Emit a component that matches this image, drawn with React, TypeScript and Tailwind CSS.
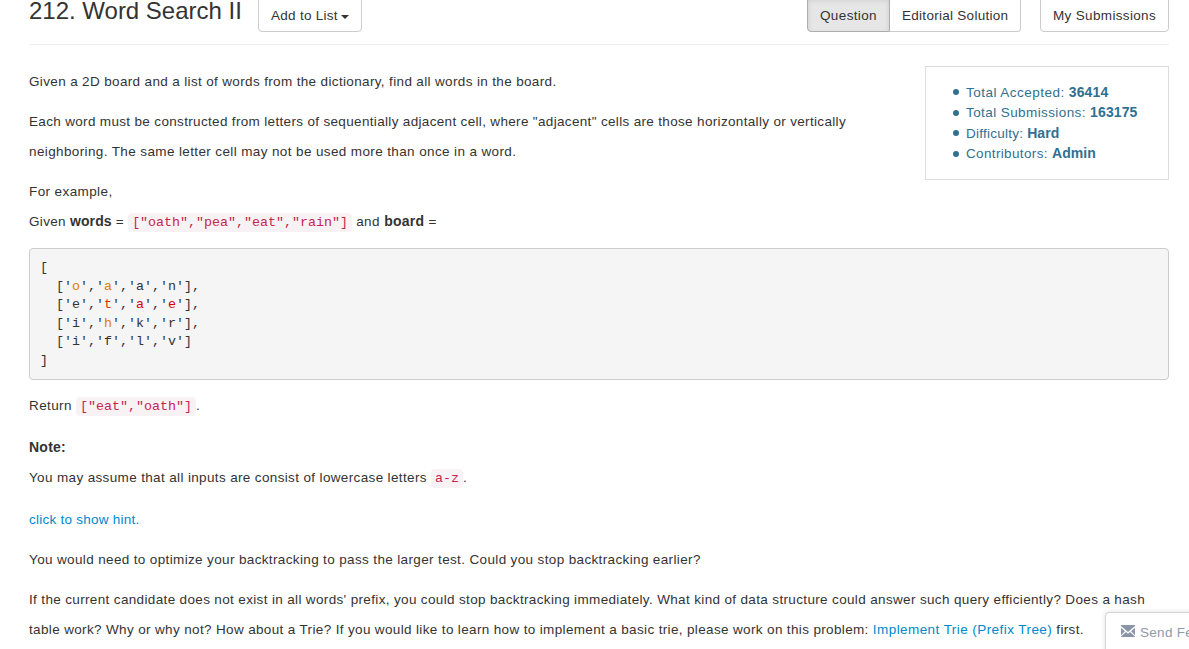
import type { ReactNode } from "react";

function Line({ children, className = "pt-px" }: { children: ReactNode; className?: string }) {
  return <span className={`block h-[30px] whitespace-pre ${className}`}>{children}</span>;
}

function Code({ children }: { children: ReactNode }) {
  return (
    <code className="rounded bg-[#f9f2f4] px-1 py-0.5 font-['Liberation_Mono',monospace] text-[13.33px] tracking-normal text-[#c7254e]">
      {children}
    </code>
  );
}

function Stat({ label, value, className = "" }: { label: string; value: string; className?: string }) {
  return (
    <li className="flex items-center whitespace-pre">
      <span className="mr-[7px] size-[6px] rounded-full bg-[#31708f]" />
      <span className={`pt-px ${className}`}>
        {label}: <b className="text-[14px] leading-none tracking-[0.1px]">{value}</b>
      </span>
    </li>
  );
}

const O = ({ children }: { children: ReactNode }) => <span className="text-[#e07c00]">{children}</span>;
const R = ({ children }: { children: ReactNode }) => <span className="text-[#d90000]">{children}</span>;

export default function App() {
  return (
    <div className="relative h-[649px] w-[1189px] overflow-hidden bg-white pr-5 pl-[29px] font-['Liberation_Sans',Arial,sans-serif] text-[13.5px] leading-[30px] text-[#333]">
      <header className="flex h-[45px] items-start border-b border-[#eee] leading-[32px]">
        <h3 className="w-[229px] whitespace-pre text-[24px] leading-[22px] tracking-[-0.01px]">212. Word Search II</h3>
        <button className="-mt-1 flex h-9 w-[104px] items-center rounded border border-[#ccc] pt-1 pl-3 tracking-[0.28px] whitespace-pre">
          Add to List
          <span className="mt-0.5 ml-[3px] border-x-4 border-t-4 border-x-transparent border-t-[#333]" />
        </button>
        <div className="-mt-1 ml-auto flex">
          <button className="flex h-9 w-[83px] items-center rounded-l border border-[#adadad] bg-[#e6e6e6] pt-1 pl-3 tracking-[0.37px] shadow-[inset_0_3px_5px_rgba(0,0,0,0.125)]">
            Question
          </button>
          <button className="flex h-9 w-[131px] items-center rounded-r border border-l-0 border-[#ccc] pt-1 pl-3 tracking-[0.28px] whitespace-pre">
            Editorial Solution
          </button>
        </div>
        <button className="-mt-1 ml-[19px] flex h-9 w-[129px] items-center rounded border border-[#ccc] pt-1 pl-3 tracking-[0.34px] whitespace-pre">
          My Submissions
        </button>
      </header>

      <main className="pt-[21px]">
        <div className="flex h-[170px] justify-between">
          <div>
            <p className="mb-[10px]">
              <Line className="pt-px tracking-[0.352px]">Given a 2D board and a list of words from the dictionary, find all words in the board.</Line>
            </p>
            <p className="mb-[10px]">
              <Line className="pt-px tracking-[0.333px]">Each word must be constructed from letters of sequentially adjacent cell, where "adjacent" cells are those horizontally or vertically</Line>
              <Line className="pt-px tracking-[0.378px]">neighboring. The same letter cell may not be used more than once in a word.</Line>
            </p>
            <p>
              <Line className="pt-px tracking-[0.4px]">For example,</Line>
              <Line className="tracking-[0.32px]">
                Given <b className="text-[14px] tracking-[0.12px]">words</b> = <Code>["oath","pea","eat","rain"]</Code> <span className="tracking-[0.45px]">and <b className="text-[14px] tracking-[0.25px]">board</b> =</span>
              </Line>
            </p>
          </div>
          <ul className="grid h-[114px] w-[244px] auto-rows-[20.57px] items-center border border-[#ddd] pt-[15px] pl-[27px] leading-5 text-[#31708f]">
            <Stat label="Total Accepted" value="36414" className="tracking-[0.47px]" />
            <Stat label="Total Submissions" value="163175" className="tracking-[0.41px]" />
            <Stat label="Difficulty" value="Hard" className="tracking-[0.24px]" />
            <Stat label="Contributors" value="Admin" className="tracking-[0.35px]" />
          </ul>
        </div>

        <pre className="mt-3 mb-[11px] h-[132px] rounded border border-[#ccc] bg-[#f5f5f5] pt-[10px] pl-[10px] font-['Liberation_Mono',monospace] text-[13.33px] leading-[18.57px]">
          <div>[</div>
          <div>{"  ['"}<O>o</O>{"','"}<O>a</O>{"','a','n'],"}</div>
          <div>{"  ['e','"}<span className="text-[#dc3000]">t</span>{"','"}<R>a</R>{"','"}<R>e</R>{"'],"}</div>
          <div>{"  ['i','"}<O>h</O>{"','k','r'],"}</div>
          <div>{"  ['i','f','l','v']"}</div>
          <div>]</div>
        </pre>

        <p>
          <Line className="tracking-[0.4px]">Return <Code>["eat","oath"]</Code>.</Line>
        </p>
        <p className="mt-[11px]">
          <Line className="tracking-[0.25px]"><b className="text-[14px]">Note:</b></Line>
          <Line className="pt-px tracking-[0.356px]">You may assume that all inputs are consist of lowercase letters <Code>a-z</Code>.</Line>
        </p>
        <p className="mt-3 text-[#0088cc]">
          <Line className="pt-px tracking-[0.25px]">click to show hint.</Line>
        </p>
        <p className="mt-[10px]">
          <Line className="pt-px tracking-[0.36px]">You would need to optimize your backtracking to pass the larger test. Could you stop backtracking earlier?</Line>
        </p>
        <p className="mt-[10px]">
          <Line className="pt-px tracking-[0.35px]">If the current candidate does not exist in all words' prefix, you could stop backtracking immediately. What kind of data structure could answer such query efficiently? Does a hash</Line>
          <Line className="pt-px tracking-[0.353px]">
            table work? Why or why not? How about a Trie? If you would like to learn how to implement a basic trie, please work on this problem: <a className="tracking-[0.43px] text-[#0088cc]">Implement Trie (Prefix Tree)</a> first.
          </Line>
        </p>
      </main>

      <div className="absolute top-[612px] left-[1105px] flex h-12 w-[120px] rounded-tl border border-[#d5d5d5] bg-white pt-[5px] pl-[15px] tracking-[0.3px] whitespace-pre text-[#9199a9] shadow-[0_0_5px_#ddd]">
        <svg viewBox="0 0 14 12" className="mt-[7px] mr-[5px] h-3 w-[14px] shrink-0" fill="#8c94a8">
          <path d="M0 0h14v1L7 7 0 1zM0 2.8l4 3.4-4 4zM14 2.8l-4 3.4 4 4zM0 12v-.4l5-4.6 2 1.7L9 7l5 4.6v.4z" />
        </svg>
        Send Feedback
      </div>
    </div>
  );
}
